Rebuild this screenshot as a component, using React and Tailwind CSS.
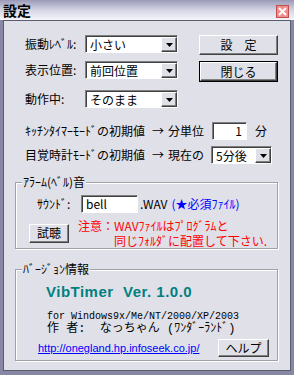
const BG = 'bg-[#e0e0e8]';

function Arrow() {
  return (
    <div className={`h-full w-[16px] ${BG} border border-t-white border-l-white border-r-[#404040] border-b-[#404040] shadow-[inset_-1px_-1px_0_#808080] flex items-center justify-center`}>
      <svg width="7" height="4" viewBox="0 0 7 4">
        <path d="M0 0h7L3.5 4z" fill="#000" />
      </svg>
    </div>
  );
}

function Select({ value, className = '' }) {
  return (
    <div className={`flex items-stretch h-[18px] bg-white border border-[#808080] border-r-white border-b-white shadow-[inset_1px_1px_0_#404040] pl-[1px] pt-[1px] ${className}`}>
      <span className="flex-1 pl-[3px] text-[12px] leading-[15px] text-black">{value}</span>
      <Arrow />
    </div>
  );
}

function Input({ value, className = '' }) {
  return (
    <div className={`h-[18px] bg-white border border-[#808080] border-r-white border-b-white shadow-[inset_1px_1px_0_#404040] px-[4px] text-[12px] leading-[16px] text-black ${className}`}>
      {value}
    </div>
  );
}

function Button({ children, className = '', isDefault = false }) {
  const inner = (
    <div className={`w-full h-full ${BG} border border-t-white border-l-white border-r-[#404040] border-b-[#404040] shadow-[inset_-1px_-1px_0_#808080] flex items-center justify-center text-[12px] text-black`}>
      {children}
    </div>
  );
  if (isDefault) {
    return <div className={`border border-black ${className}`}>{inner}</div>;
  }
  return <div className={className}>{inner}</div>;
}

function Group({ title, className = '', children }) {
  return (
    <div className={`relative border border-[#a0a0a8] shadow-[inset_1px_1px_0_#fff,1px_1px_0_#fff] ${className}`}>
      <span className={`absolute -top-[9px] left-[6px] px-[1px] ${BG} text-[12px] leading-[16px] text-black`}>{title}</span>
      {children}
    </div>
  );
}

export default function App() {
  return (
    <div className="w-[294px] h-[375px] bg-[#8888a4] flex flex-col font-['Noto_Sans_CJK_JP',sans-serif] overflow-hidden">
      {/* title bar */}
      <div className="h-[20px] flex items-center justify-between pl-[3px] pr-[5px] bg-gradient-to-b from-[#9a9ab8] via-[#d4d4e4] to-[#f6f6fa]">
        <span className="text-[14px] font-bold leading-none text-black">設定</span>
        <div className="w-[13px] h-[13px] mt-[3px] bg-[#f08c8c] border border-[#c05050] flex items-center justify-center">
          <svg width="9" height="9" viewBox="0 0 9 9">
            <path d="M1 1l7 7M8 1l-7 7" stroke="#fff" strokeWidth="2" />
          </svg>
        </div>
      </div>

      <div className={`flex-1 mx-[3px] mb-[4px] border border-[#5c5c70] ${BG} flex flex-col text-[12px] text-black`}>
        {/* top settings */}
        <div className="flex pt-[14px] pl-[21px]">
          <div className="flex flex-col">
            <div className="flex items-center">
              <span className="w-[60px]">振動ﾚﾍﾞﾙ:</span>
              <Select value="小さい" className="w-[93px]" />
            </div>
            <div className="flex items-center mt-[8px]">
              <span className="w-[60px]">表示位置:</span>
              <Select value="前回位置" className="w-[93px]" />
            </div>
            <div className="flex items-center mt-[11px]">
              <span className="w-[60px]">動作中:</span>
              <Select value="そのまま" className="w-[93px]" />
            </div>
          </div>
          <div className="flex flex-col ml-[21px] gap-[6px]">
            <Button className="w-[79px] h-[20px]">設　定</Button>
            <Button className="w-[79px] h-[21px]" isDefault>閉じる</Button>
          </div>
        </div>

        {/* timer defaults */}
        <div className="flex items-center pl-[21px] mt-[14px] whitespace-nowrap">
          <span className="w-[127px]">ｷｯﾁﾝﾀｲﾏｰﾓｰﾄﾞの初期値</span>
          <span className="w-[16px]">→</span>
          <span className="w-[44px]">分単位</span>
          <Input value="1" className="w-[35px] text-right" />
          <span className="ml-[8px]">分</span>
        </div>
        <div className="flex items-center pl-[21px] mt-[6px] whitespace-nowrap">
          <span className="w-[127px]">目覚時計ﾓｰﾄﾞの初期値</span>
          <span className="w-[16px]">→</span>
          <span className="w-[43px]">現在の</span>
          <Select value="5分後" className="w-[61px]" />
        </div>

        {/* alarm sound */}
        <Group title="ｱﾗｰﾑ(ﾍﾞﾙ)音" className="ml-[11px] mt-[18px] w-[263px] h-[67px]">
          <div className="flex items-center pl-[21px] pt-[12px]">
            <span className="w-[44px]">ｻｳﾝﾄﾞ:</span>
            <Input value="bell" className="w-[57px]" />
            <span className="ml-[2px]">.WAV</span>
            <span className="ml-[4px] text-[#0000ff]">(★必須ﾌｧｲﾙ)</span>
          </div>
          <div className="flex items-center pl-[13px] mt-[5px]">
            <Button className="w-[40px] h-[19px]">試聴</Button>
            <div className="ml-[9px] text-[#ff0000] leading-[15px]">
              <div>注意：WAVﾌｧｲﾙはﾌﾟﾛｸﾞﾗﾑと</div>
              <div className="pl-[36px]">同じﾌｫﾙﾀﾞに配置して下さい.</div>
            </div>
          </div>
        </Group>

        {/* version info */}
        <Group title="ﾊﾞｰｼﾞｮﾝ情報" className="ml-[11px] mt-[20px] w-[263px] h-[92px]">
          <div className="pl-[30px] pt-[13px] text-[15px] font-bold text-[#008080] leading-[18px] font-['Liberation_Sans',sans-serif] tracking-[0.5px]">
            VibTimer&nbsp;&nbsp;Ver. 1.0.0
          </div>
          <div className="pl-[31px] mt-[9px] leading-[13px] font-['Liberation_Mono','Noto_Sans_CJK_JP',monospace] text-[10px]">
            <div>for Windows9x/Me/NT/2000/XP/2003</div>
            <div className="text-[12px] whitespace-pre">{'作 者:  なっちゃん (ﾜﾝﾀﾞｰﾗﾝﾄﾞ)'}</div>
          </div>
          <div className="flex items-center pl-[22px] mt-[3px]">
            <span className="w-[180px] text-[#0000ff] underline text-[11px] font-['Liberation_Sans',sans-serif]">http://onegland.hp.infoseek.co.jp/</span>
            <Button className="w-[51px] h-[18px]">ヘルプ</Button>
          </div>
        </Group>
      </div>
    </div>
  );
}
